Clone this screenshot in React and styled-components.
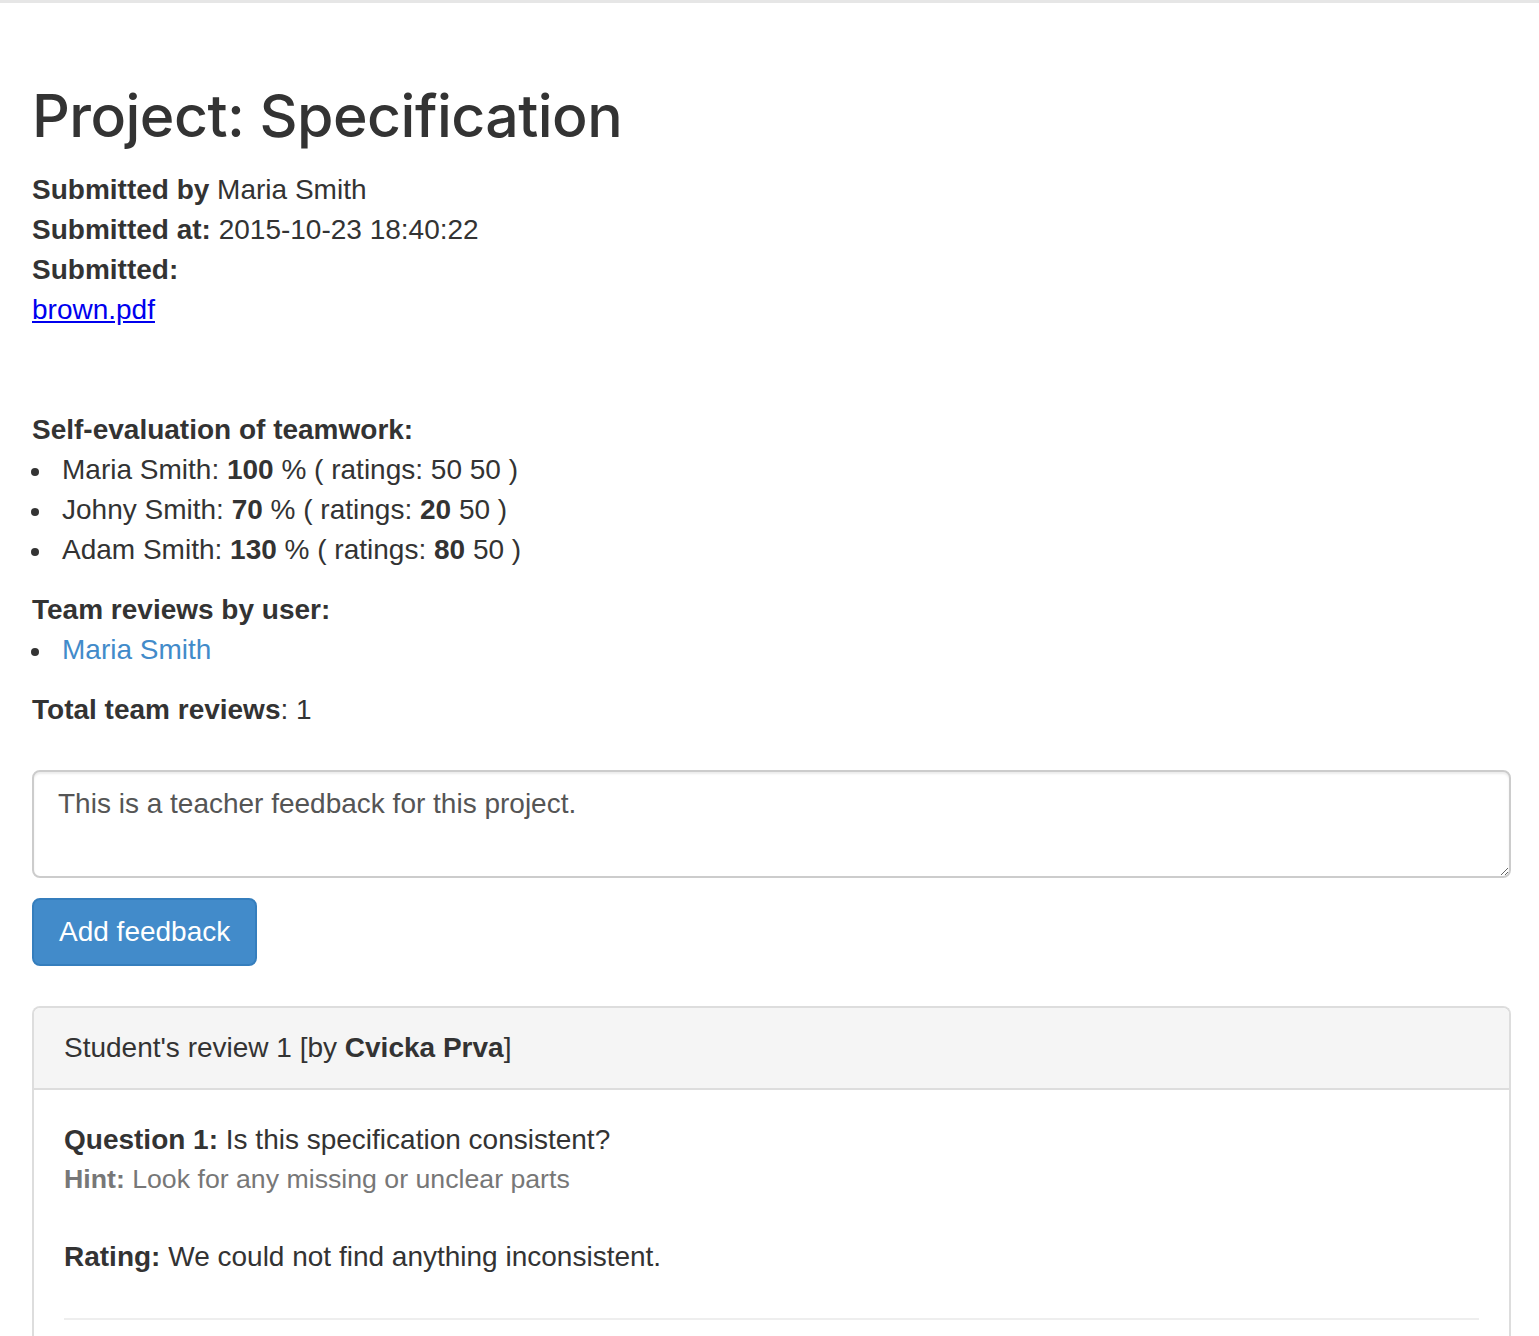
import React from "react"
import styled, { createGlobalStyle } from "styled-components"

const GlobalStyle = createGlobalStyle`
  html, body {
    margin: 0;
    padding: 0;
    background: #fff;
  }
  body {
    font-family: "Liberation Sans", Arial, Helvetica, sans-serif;
    font-size: 28px;
    line-height: 40px;
    color: #333;
  }
  * {
    box-sizing: border-box;
  }
`

const ratings = [
  { name: "Maria Smith", percent: 100, first: "50", firstBold: false, second: "50" },
  { name: "Johny Smith", percent: 70, first: "20", firstBold: true, second: "50" },
  { name: "Adam Smith", percent: 130, first: "80", firstBold: true, second: "50" },
]

const App = () => {
  return (
    <>
      <GlobalStyle />
      <TopBar />
      <Container>
        <Title>Project: Specification</Title>
        <InfoLine>
          <b>Submitted by</b> Maria Smith
        </InfoLine>
        <InfoLine>
          <b>Submitted at:</b> 2015-10-23 18:40:22
        </InfoLine>
        <InfoLine>
          <b>Submitted:</b>
        </InfoLine>
        <FileLink href="#">brown.pdf</FileLink>

        <Section>
          <b>Self-evaluation of teamwork:</b>
          <List>
            {ratings.map((item, index) => (
              <Item key={`rating ${index}`}>
                {item.name}: <b>{item.percent}</b> % ( ratings:{" "}
                {item.firstBold ? <b>{item.first}</b> : item.first} {item.second} )
              </Item>
            ))}
          </List>
        </Section>

        <Section>
          <b>Team reviews by user:</b>
          <List>
            <Item>
              <UserLink href="#">Maria Smith</UserLink>
            </Item>
          </List>
        </Section>

        <Section>
          <b>Total team reviews</b>: 1
        </Section>

        <Feedback defaultValue="This is a teacher feedback for this project." />
        <PrimaryButton>Add feedback</PrimaryButton>

        <Panel>
          <PanelHeading>
            Student's review 1 [by <b>Cvicka Prva</b>]
          </PanelHeading>
          <PanelBody>
            <div>
              <b>Question 1:</b> Is this specification consistent?
            </div>
            <Hint>
              <b>Hint:</b> Look for any missing or unclear parts
            </Hint>
            <Answer>
              <b>Rating:</b> We could not find anything inconsistent.
            </Answer>
            <Divider />
          </PanelBody>
        </Panel>
      </Container>
    </>
  )
}

export default App

const TopBar = styled.div`
  height: 3px;
  background: #e6e6e6;
`
const Container = styled.div`
  padding: 0 28px 0 32px;
`
const Title = styled.h1`
  margin: 81px 0 22px;
  font-family: Inter, "Liberation Sans", Arial, sans-serif;
  font-size: 59px;
  line-height: 64px;
  font-weight: 500;
  color: #333;
  letter-spacing: -0.55px;
`
const InfoLine = styled.div`
  b {
    font-weight: 700;
  }
`
const FileLink = styled.a`
  display: inline-block;
  color: #0000ee;
  text-decoration: underline;
  margin-bottom: 80px;
`
const Section = styled.div`
  margin-bottom: 20px;
`
const List = styled.ul`
  margin: 0;
  padding-left: 30px;
  list-style: none;
`
const Item = styled.li`
  line-height: 40px;
  &::before {
    content: "";
    display: inline-block;
    width: 8px;
    height: 8px;
    margin-left: -31px;
    margin-right: 23px;
    border-radius: 50%;
    background: #333;
    vertical-align: 3px;
  }
`
const UserLink = styled.a`
  color: #428bca;
  text-decoration: none;
`
const Feedback = styled.textarea`
  display: block;
  width: 100%;
  height: 108px;
  margin-top: 40px;
  padding: 12px 24px;
  border: 2px solid #ccc;
  border-radius: 8px;
  font-family: inherit;
  font-size: 28px;
  line-height: 40px;
  color: #555;
  resize: vertical;
  box-shadow: inset 0 2px 2px rgba(0, 0, 0, 0.075);
  outline: none;
`
const PrimaryButton = styled.button`
  display: block;
  margin-top: 20px;
  padding: 12px 25px;
  border: 2px solid #357ebd;
  border-radius: 8px;
  background: #428bca;
  color: #fff;
  font-family: inherit;
  font-size: 28px;
  line-height: 40px;
  cursor: pointer;
`
const Panel = styled.div`
  margin-top: 40px;
  border: 2px solid #ddd;
  border-bottom: none;
  border-radius: 8px 8px 0 0;
  overflow: hidden;
`
const PanelHeading = styled.div`
  padding: 20px 30px;
  background: #f5f5f5;
  border-bottom: 2px solid #ddd;
  color: #333;
`
const PanelBody = styled.div`
  padding: 30px 30px 20px;
`
const Hint = styled.div`
  color: #777;
  font-size: 26.7px;
  line-height: 38px;
`
const Answer = styled.div`
  margin-top: 39px;
`
const Divider = styled.hr`
  margin: 41px 0 0;
  border: 0;
  border-top: 2px solid #eee;
`
